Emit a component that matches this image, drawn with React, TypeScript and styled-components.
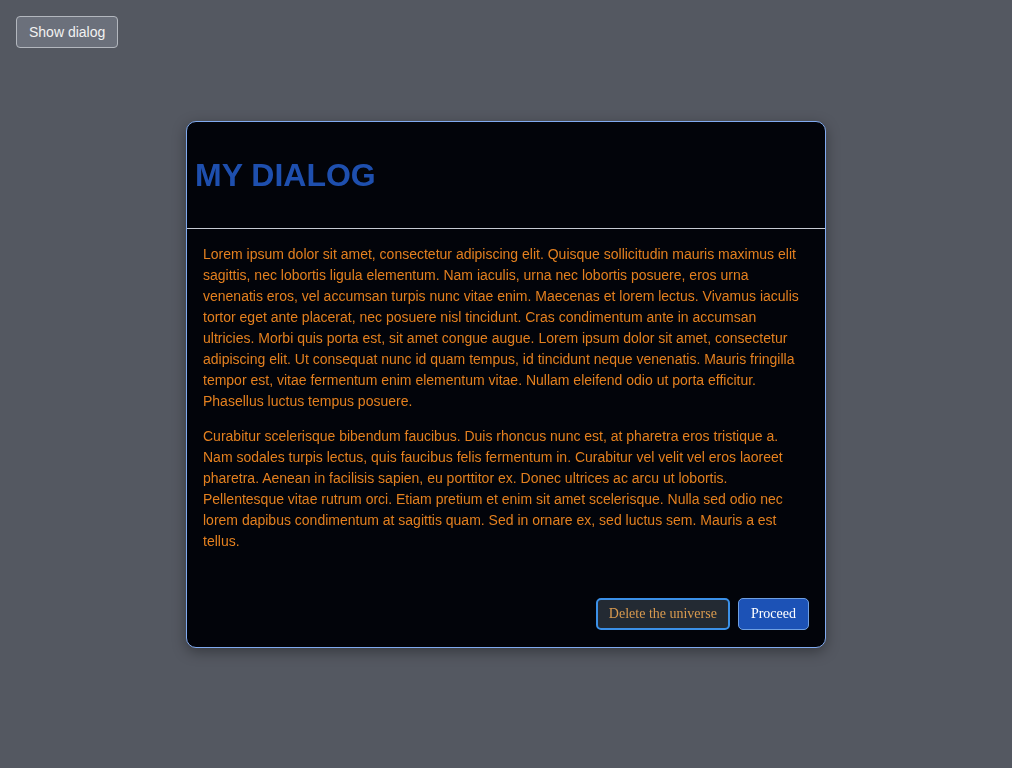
import React from "react";
import styled, { createGlobalStyle } from "styled-components";

const Global = createGlobalStyle`
  html, body { margin: 0; padding: 0; }
  body {
    background: #545861;
    font-family: "Liberation Sans", Arial, sans-serif;
    min-height: 100vh;
  }
`;

const Page = styled.div`
  padding: 16px;
`;

const ShowButton = styled.button`
  height: 32px;
  padding: 0 12px;
  background: #6b707b;
  border: 1px solid #b3b7be;
  border-radius: 4px;
  color: #f2f2f2;
  font-family: "Liberation Sans", Arial, sans-serif;
  font-size: 14px;
`;

const Overlay = styled.div`
  position: fixed;
  inset: 0;
  display: flex;
  align-items: center;
  justify-content: center;
`;

const Dialog = styled.div`
  width: 638px;
  height: 525px;
  display: flex;
  flex-direction: column;
  background: #02040a;
  border: 1px solid #80aaf0;
  border-radius: 10px;
  box-shadow: 0 4px 14px rgba(0, 0, 0, 0.35);
  overflow: hidden;
`;

const Header = styled.header`
  padding: 0 8px;
  height: 107px;
  box-sizing: border-box;
  border-bottom: 1px solid #c6cad2;
  display: flex;
  align-items: center;
`;

const Title = styled.h2`
  margin: 1px 0 0;
  font-size: 32px;
  line-height: 37px;
  font-weight: 700;
  color: #1e4fae;
  font-family: "Liberation Sans", Arial, sans-serif;
`;

const Body = styled.div`
  padding: 15px 16px 0;
  flex: 1;
`;

const Para = styled.p`
  margin: 0 0 14px;
  font-size: 14px;
  line-height: 21px;
  color: #e4801f;
  &:last-child { margin-bottom: 0; }
`;

const Footer = styled.footer`
  display: flex;
  justify-content: flex-end;
  gap: 8px;
  padding: 0 16px 17px;
`;

const Btn = styled.button<{ $primary?: boolean }>`
  height: 32px;
  padding: 0 ${(p) => (p.$primary ? "12px" : "11px")};
  border-radius: 5px;
  font-family: "Liberation Serif", "Times New Roman", serif;
  font-size: 14px;
  box-sizing: border-box;
  background: ${(p) => (p.$primary ? "#1c52b6" : "#232a33")};
  color: ${(p) => (p.$primary ? "#ffffff" : "#d99a4f")};
  border: ${(p) => (p.$primary ? "1px solid #6e9fe2" : "2px solid #3b90e8")};
`;

export default function App() {
  return (
    <>
      <Global />
      <Page>
        <ShowButton>Show dialog</ShowButton>
      </Page>
      <Overlay>
        <Dialog role="dialog">
          <Header>
            <Title>MY DIALOG</Title>
          </Header>
          <Body>
            <Para>
              Lorem ipsum dolor sit amet, consectetur adipiscing elit. Quisque sollicitudin mauris maximus elit
              sagittis, nec lobortis ligula elementum. Nam iaculis, urna nec lobortis posuere, eros urna
              venenatis eros, vel accumsan turpis nunc vitae enim. Maecenas et lorem lectus. Vivamus iaculis
              tortor eget ante placerat, nec posuere nisl tincidunt. Cras condimentum ante in accumsan
              ultricies. Morbi quis porta est, sit amet congue augue. Lorem ipsum dolor sit amet, consectetur
              adipiscing elit. Ut consequat nunc id quam tempus, id tincidunt neque venenatis. Mauris fringilla
              tempor est, vitae fermentum enim elementum vitae. Nullam eleifend odio ut porta efficitur.
              Phasellus luctus tempus posuere.
            </Para>
            <Para>
              Curabitur scelerisque bibendum faucibus. Duis rhoncus nunc est, at pharetra eros tristique a.
              Nam sodales turpis lectus, quis faucibus felis fermentum in. Curabitur vel velit vel eros laoreet
              pharetra. Aenean in facilisis sapien, eu porttitor ex. Donec ultrices ac arcu ut lobortis.
              Pellentesque vitae rutrum orci. Etiam pretium et enim sit amet scelerisque. Nulla sed odio nec
              lorem dapibus condimentum at sagittis quam. Sed in ornare ex, sed luctus sem. Mauris a est
              tellus.
            </Para>
          </Body>
          <Footer>
            <Btn>Delete the universe</Btn>
            <Btn $primary>Proceed</Btn>
          </Footer>
        </Dialog>
      </Overlay>
    </>
  );
}
